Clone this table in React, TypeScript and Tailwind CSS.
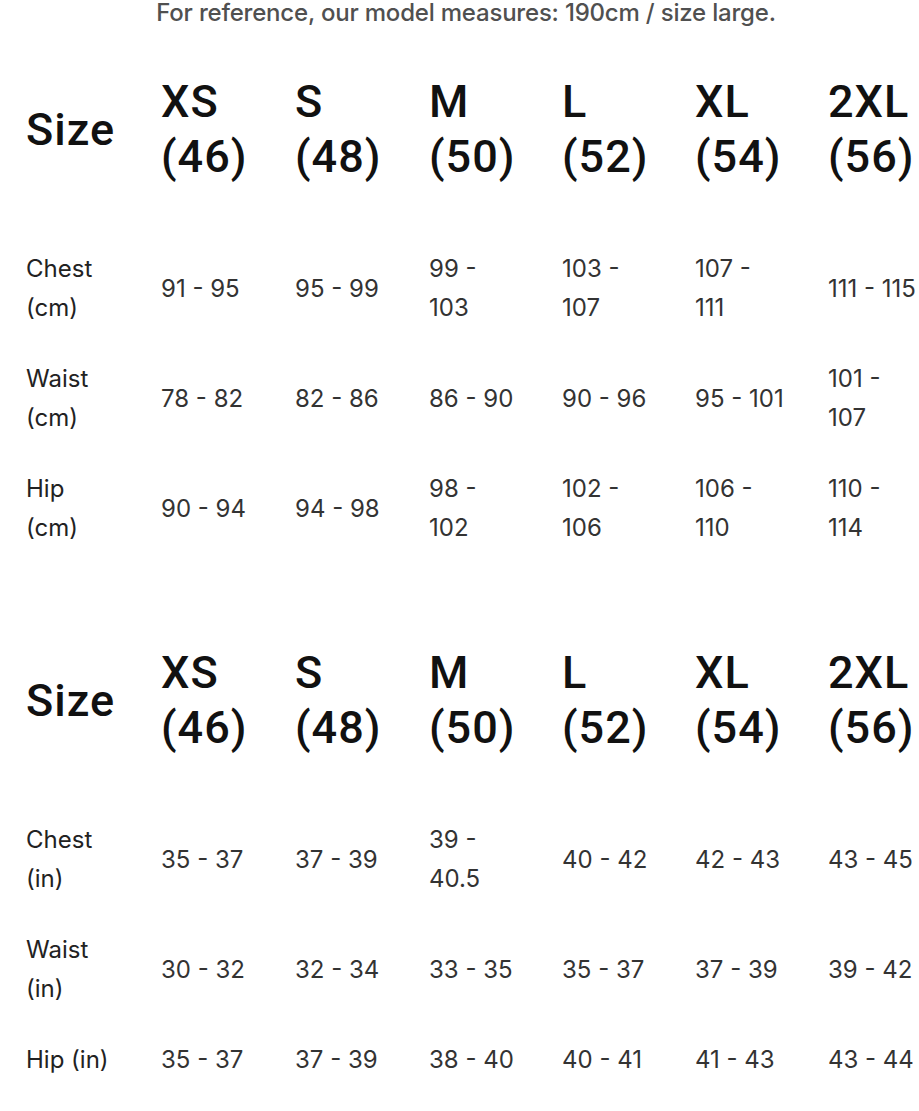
const sizes = [
  ["XS", "(46)"],
  ["S", "(48)"],
  ["M", "(50)"],
  ["L", "(52)"],
  ["XL", "(54)"],
  ["2XL", "(56)"],
]

type Row = { label: string[]; cells: string[][] }

const cmRows: Row[] = [
  {
    label: ["Chest", "(cm)"],
    cells: [["91 - 95"], ["95 - 99"], ["99 -", "103"], ["103 -", "107"], ["107 -", "111"], ["111 - 115"]],
  },
  {
    label: ["Waist", "(cm)"],
    cells: [["78 - 82"], ["82 - 86"], ["86 - 90"], ["90 - 96"], ["95 - 101"], ["101 -", "107"]],
  },
  {
    label: ["Hip", "(cm)"],
    cells: [["90 - 94"], ["94 - 98"], ["98 -", "102"], ["102 -", "106"], ["106 -", "110"], ["110 -", "114"]],
  },
]

const inRows: Row[] = [
  {
    label: ["Chest", "(in)"],
    cells: [["35 - 37"], ["37 - 39"], ["39 -", "40.5"], ["40 - 42"], ["42 - 43"], ["43 - 45"]],
  },
  {
    label: ["Waist", "(in)"],
    cells: [["30 - 32"], ["32 - 34"], ["33 - 35"], ["35 - 37"], ["37 - 39"], ["39 - 42"]],
  },
  {
    label: ["Hip (in)"],
    cells: [["35 - 37"], ["37 - 39"], ["38 - 40"], ["40 - 41"], ["41 - 43"], ["43 - 44"]],
  },
]

const cols = "grid grid-cols-[135px_134px_134px_133px_133px_133px_91px] items-center"

function Lines({ lines }: { lines: string[] }) {
  return (
    <div className="flex flex-col whitespace-nowrap">
      {lines.map((l) => (
        <span key={l}>{l}</span>
      ))}
    </div>
  )
}

function SizeTable({ rows }: { rows: Row[] }) {
  return (
    <div className="flex flex-col">
      {/* header */}
      <div className={`${cols} font-['Roboto',sans-serif] font-medium text-[45px] tracking-[1px] leading-[55px] text-[#111]`}>
        <div>Size</div>
        {sizes.map((s) => (
          <Lines key={s[0]} lines={s} />
        ))}
      </div>
      {/* body */}
      <div className="flex flex-col gap-8 pt-[65px] font-['Inter',sans-serif] text-[24px] leading-[39px]">
        {rows.map((r) => (
          <div key={r.label.join()} className={cols}>
            <div className="text-[#222]">
              <Lines lines={r.label} />
            </div>
            {r.cells.map((c, i) => (
              <div key={i} className="text-[#333]">
                <Lines lines={c} />
              </div>
            ))}
          </div>
        ))}
      </div>
    </div>
  )
}

export default function App() {
  return (
    <div className="w-[919px] h-[1111px] overflow-hidden bg-white">
      <p className="pl-[13px] text-center font-['Inter',sans-serif] font-medium text-[24px] leading-[26px] tracking-[-0.2px] text-[#505050]">
        For reference, our model measures: 190cm / size large.
      </p>
      <div className="mt-[48px] pl-[26px] flex flex-col gap-[98px]">
        <SizeTable rows={cmRows} />
        <SizeTable rows={inRows} />
      </div>
    </div>
  )
}
